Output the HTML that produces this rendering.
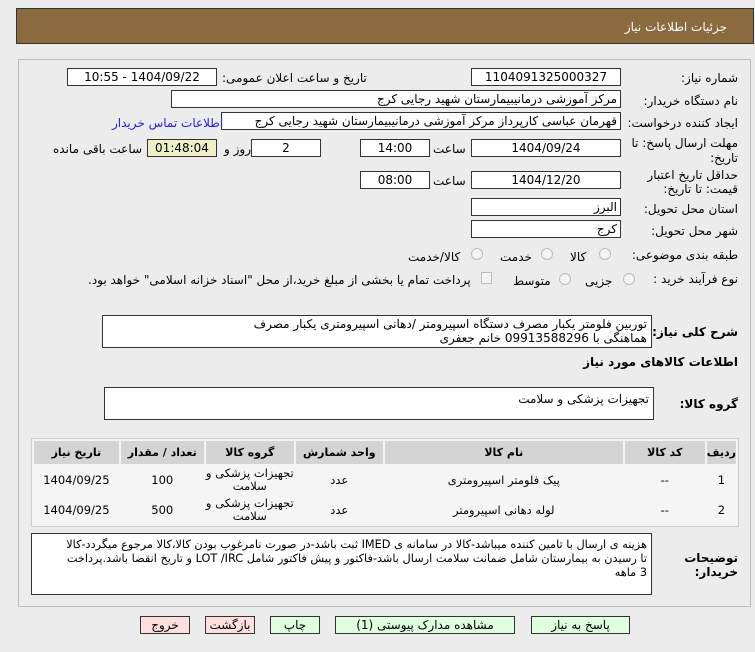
<!DOCTYPE html>
<html><head><meta charset="utf-8"><style>
*{box-sizing:border-box;margin:0;padding:0}
body{width:755px;height:652px;background:#ececec;font-family:"DejaVu Sans","Liberation Sans","Noto Sans CJK SC",sans-serif;font-size:12px;color:#000;position:relative;overflow:hidden}
.a{position:absolute;white-space:nowrap}
.hdr{left:16px;top:8px;width:738px;height:36px;background:#8b6a3e;border:1px solid #333}
.panel{left:18px;top:59px;width:733px;height:548px;border:1px solid #bbb}
.in{position:absolute;background:#fff;border:1px solid #333;height:18px;line-height:16px;padding:0 3px;direction:rtl;font-size:12px;white-space:nowrap;overflow:hidden}
.c{text-align:center}
.l{direction:rtl;text-align:right;font-size:12px;line-height:14px}
.ta{position:absolute;background:#fff;border:1px solid #333;direction:rtl;font-size:12px;padding:1px 4px;line-height:14px;white-space:nowrap;overflow:hidden}
.rad{position:absolute;width:12px;height:12px;border-radius:50%;border:1px solid #bbb;background:#f4f4f4}
table{position:absolute;border-collapse:separate;border-spacing:2px;background:#f4f4f4;border:1px solid #ccc;direction:rtl}
th{background:#d4d4d4;height:23px;font-size:11px}
td{background:#f5f5f5;height:28px;text-align:center;font-size:11.5px;line-height:13px}
.btn{position:absolute;height:18px;border:1px solid #333;line-height:16px;text-align:center;font-size:12px;direction:rtl}
.g{background:#dfffdf}.p{background:#ffdede}
</style></head><body>
<div class="a hdr"></div>
<div class="a l" style="right:28px;top:20px;color:#fff">جزئیات اطلاعات نیاز</div>
<div class="a panel"></div>

<div class="a l" style="right:17px;top:71px">شماره نیاز:</div>
<div class="in c" style="left:471px;top:68px;width:150px">1104091325000327</div>
<div class="a l" style="left:222px;top:71px">تاریخ و ساعت اعلان عمومی:</div>
<div class="in c" style="left:67px;top:68px;width:150px">1404/09/22 - 10:55</div>

<div class="a l" style="right:17px;top:94px">نام دستگاه خریدار:</div>
<div class="in" style="left:171px;top:90px;width:450px">مرکز آموزشی درمانیبیمارستان شهید رجایی کرج</div>

<div class="a l" style="right:17px;top:116px">ایجاد کننده درخواست:</div>
<div class="in" style="left:221px;top:112px;width:400px">قهرمان عباسی کارپرداز مرکز آموزشی درمانیبیمارستان شهید رجایی کرج</div>
<div class="a l" style="left:112px;top:116px;color:#2222dd">اطلاعات تماس خریدار</div>

<div class="a l" style="right:17px;top:136px">مهلت ارسال پاسخ: تا</div>
<div class="a l" style="right:17px;top:151px">تاریخ:</div>
<div class="in c" style="left:471px;top:139px;width:150px">1404/09/24</div>
<div class="a l" style="left:433px;top:142px">ساعت</div>
<div class="in c" style="left:360px;top:139px;width:70px">14:00</div>
<div class="in c" style="left:251px;top:139px;width:70px">2</div>
<div class="a l" style="left:224px;top:142px">روز و</div>
<div class="in c" style="left:147px;top:139px;width:70px;background:#f0f0c8">01:48:04</div>
<div class="a l" style="left:53px;top:142px">ساعت باقی مانده</div>

<div class="a l" style="right:17px;top:168px">حداقل تاریخ اعتبار</div>
<div class="a l" style="right:17px;top:182px">قیمت: تا تاریخ:</div>
<div class="in c" style="left:471px;top:171px;width:150px">1404/12/20</div>
<div class="a l" style="left:433px;top:174px">ساعت</div>
<div class="in c" style="left:360px;top:171px;width:70px">08:00</div>

<div class="a l" style="right:17px;top:202px">استان محل تحویل:</div>
<div class="in" style="left:471px;top:198px;width:150px">البرز</div>
<div class="a l" style="right:17px;top:224px">شهر محل تحویل:</div>
<div class="in" style="left:471px;top:220px;width:150px">کرج</div>

<div class="a l" style="right:17px;top:248px">طبقه بندی موضوعی:</div>
<div class="rad" style="left:599px;top:248px"></div><div class="a l" style="left:570px;top:250px">کالا</div>
<div class="rad" style="left:541px;top:248px"></div><div class="a l" style="left:500px;top:250px">خدمت</div>
<div class="rad" style="left:471px;top:248px"></div><div class="a l" style="left:408px;top:250px">کالا/خدمت</div>

<div class="a l" style="right:17px;top:272px">نوع فرآیند خرید :</div>
<div class="rad" style="left:623px;top:273px"></div><div class="a l" style="left:585px;top:274px">جزیی</div>
<div class="rad" style="left:559px;top:273px"></div><div class="a l" style="left:513px;top:274px">متوسط</div>
<div class="a" style="left:481px;top:272px;width:11px;height:12px;border:1px solid #bbb;background:#f4f4f4"></div>
<div class="a l" style="left:88px;top:273px">پرداخت تمام یا بخشی از مبلغ خرید،از محل "اسناد خزانه اسلامی" خواهد بود.</div>

<div class="a l" style="right:17px;top:325px;font-weight:bold">شرح کلی نیاز:</div>
<div class="ta" style="left:102px;top:315px;width:550px;height:33px">توربین فلومتر یکبار مصرف دستگاه اسپیرومتر /دهانی اسپیرومتری یکبار مصرف<br>هماهنگی با 09913588296 خانم جعفری</div>
<div class="a l" style="right:17px;top:355px;font-weight:bold">اطلاعات کالاهای مورد نیاز</div>
<div class="a l" style="right:17px;top:397px;font-weight:bold">گروه کالا:</div>
<div class="ta" style="left:104px;top:387px;width:550px;height:33px;padding-top:4px">تجهیزات پزشکی و سلامت</div>

<table style="left:31px;top:438px;width:708px">
<tr><th style="width:28px">ردیف</th><th style="width:80px">کد کالا</th><th style="width:238px">نام کالا</th><th style="width:87px">واحد شمارش</th><th style="width:88px">گروه کالا</th><th style="width:83px">تعداد / مقدار</th><th>تاریخ نیاز</th></tr>
<tr><td>1</td><td>--</td><td>پیک فلومتر اسپیرومتری</td><td>عدد</td><td>تجهیزات پزشکی و<br>سلامت</td><td>100</td><td>1404/09/25</td></tr>
<tr><td>2</td><td>--</td><td>لوله دهانی اسپیرومتر</td><td>عدد</td><td>تجهیزات پزشکی و<br>سلامت</td><td>500</td><td>1404/09/25</td></tr>
</table>

<div class="a l" style="right:17px;top:551px;font-weight:bold">توضیحات</div>
<div class="a l" style="right:17px;top:565px;font-weight:bold">خریدار:</div>
<div class="ta" style="left:31px;top:533px;width:621px;height:62px;padding-top:4px;font-size:11.3px">هزینه ی ارسال با تامین کننده میباشد-کالا در سامانه ی IMED ثبت باشد-در صورت نامرغوب بودن کالا،کالا مرجوع میگردد-کالا<br>تا رسیدن به بیمارستان شامل ضمانت سلامت ارسال باشد-فاکتور و پیش فاکتور شامل LOT /IRC و تاریخ انقضا باشد.پرداخت<br>3 ماهه</div>

<div class="btn g" style="left:531px;top:616px;width:99px">پاسخ به نیاز</div>
<div class="btn g" style="left:335px;top:616px;width:180px">مشاهده مدارک پیوستی (1)</div>
<div class="btn g" style="left:270px;top:616px;width:50px">چاپ</div>
<div class="btn p" style="left:205px;top:616px;width:50px">بازگشت</div>
<div class="btn p" style="left:140px;top:616px;width:50px">خروج</div>
</body></html>
